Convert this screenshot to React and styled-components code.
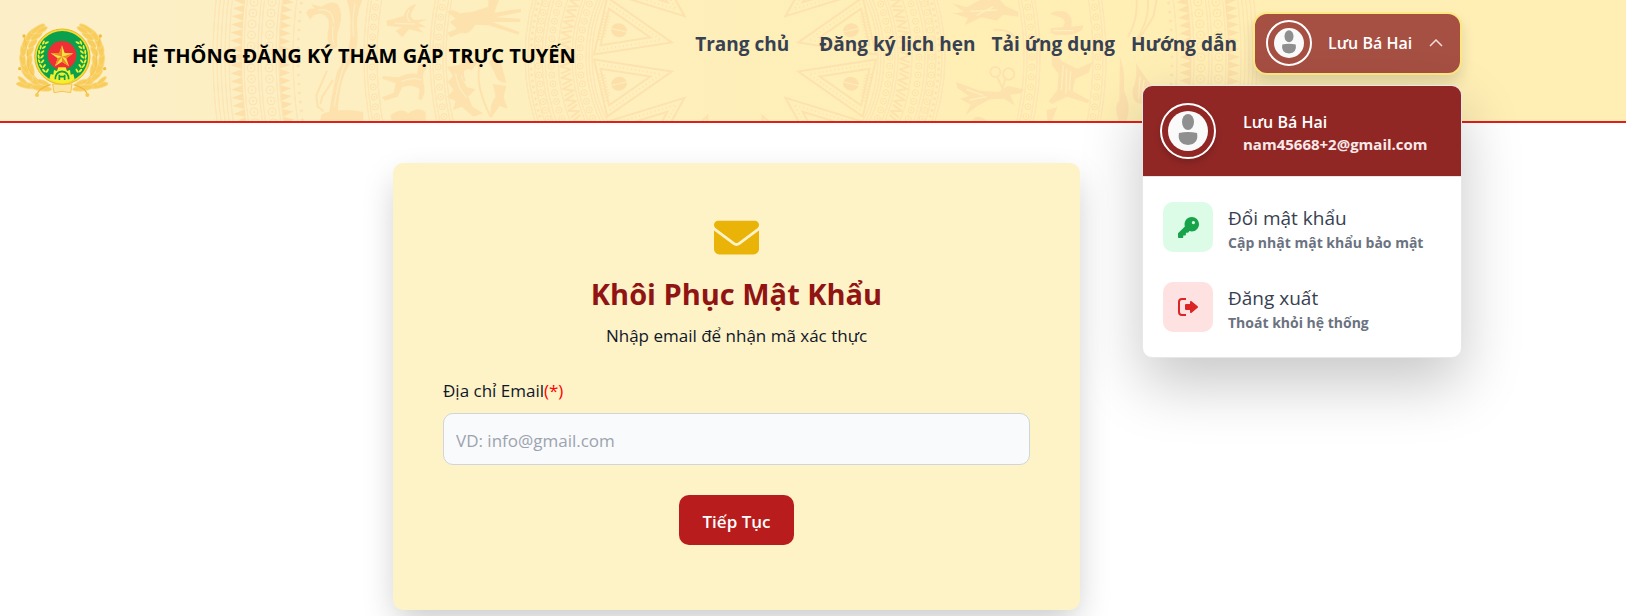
import { useState } from "react";
import styled, { createGlobalStyle } from "styled-components";
import { FaEnvelope, FaKey } from "react-icons/fa6";

const GlobalStyle = createGlobalStyle`
  * {
    box-sizing: border-box;
  }
  body {
    margin: 0;
    background: #ffffff;
    color: #0f172a;
    font-family: "Open Sans", "Noto Sans", sans-serif;
    font-size: 17px;
  }
`;

const Header = styled.header`
  position: relative;
  z-index: 2;
  background: linear-gradient(to right, #fcefc8, #ffefb5 60%);
  border-bottom: 2px solid #dc1f1f;
`;

const HeaderInner = styled.div`
  position: relative;
  display: flex;
  align-items: flex-start;
  justify-content: space-between;
  max-width: 1472px;
  padding: 12px 10px 0 16px;
`;

const DrumArt = styled.svg`
  position: absolute;
  left: 0;
  top: 0;
  width: 100%;
  height: 100%;
`;

const Brand = styled.a`
  position: relative;
  display: flex;
  align-items: center;
  gap: 24px;
  padding: 10px 0 23px;
  color: #000000;
  text-decoration: none;
`;

const BrandName = styled.span`
  padding-bottom: 8px;
  font-size: 20px;
  font-weight: 700;
  line-height: 28px;
  white-space: nowrap;
`;

const Nav = styled.nav`
  position: relative;
  display: flex;
  align-items: center;
  gap: 16px;
`;

const NavLink = styled.a`
  margin-right: ${(props) => (props.$wide ? "14px" : "0")};
  color: #374151;
  font-size: 19px;
  font-weight: 700;
  line-height: 28px;
  white-space: nowrap;
  text-decoration: none;
`;

const UserArea = styled.div`
  position: relative;
`;

const UserButton = styled.button`
  display: flex;
  align-items: center;
  width: 209px;
  padding: 6px 17px 7px 11px;
  border: 2px solid #fde882;
  border-radius: 14px;
  background: #a64f43;
  box-shadow: 0 8px 14px rgba(0, 0, 0, 0.12);
  color: #ffffff;
  font-family: inherit;
  cursor: pointer;
`;

const Avatar = styled.span`
  display: flex;
  flex: none;
  width: ${(props) => props.$size}px;
  height: ${(props) => props.$size}px;
  padding: 6px;
  border: 2px solid #ffffff;
  border-radius: 50%;
  box-shadow: ${(props) => (props.$raised ? "0 4px 6px rgba(0, 0, 0, 0.15)" : "none")};

  svg {
    width: 100%;
    height: 100%;
  }
`;

const UserName = styled.span`
  flex: 1;
  padding-left: 16px;
  font-size: 16px;
  font-weight: 600;
  line-height: 24px;
  text-align: left;
  white-space: nowrap;
`;

const Menu = styled.div`
  position: absolute;
  top: calc(100% + 10px);
  right: 0;
  width: 320px;
  overflow: hidden;
  border: 1px solid #e5e7eb;
  border-radius: 10px;
  background: #ffffff;
  box-shadow: 0 26px 60px rgba(0, 0, 0, 0.22);
`;

const MenuHeader = styled.div`
  display: flex;
  align-items: center;
  gap: 27px;
  padding: 17px;
  border-bottom: 1px solid #e5e7eb;
  background: #902725;
  color: #ffffff;
`;

const MenuUser = styled.div`
  padding-top: 3px;
`;

const MenuName = styled.div`
  font-size: 16px;
  font-weight: 600;
  line-height: 22px;
`;

const MenuEmail = styled.div`
  color: #fbe9e9;
  font-size: 15px;
  font-weight: 700;
  line-height: 22px;
`;

const MenuList = styled.div`
  display: flex;
  flex-direction: column;
  gap: 30px;
  padding: 25px 20px;
`;

const MenuItem = styled.button`
  display: flex;
  align-items: center;
  gap: 15px;
  height: 50px;
  padding: 0;
  border: 0;
  background: transparent;
  font-family: inherit;
  text-align: left;
  cursor: pointer;
`;

const MenuIcon = styled.span`
  display: flex;
  align-items: center;
  justify-content: center;
  width: 50px;
  height: 50px;
  border-radius: 10px;
  background: ${(props) => (props.$danger ? "#fee2e2" : "#dcfce7")};
  color: ${(props) => (props.$danger ? "#dc2626" : "#16a34a")};
`;

const MenuText = styled.span`
  padding-top: 4px;
`;

const MenuTitle = styled.span`
  display: block;
  color: #374151;
  font-size: 19px;
  font-weight: 500;
  line-height: 28px;
`;

const MenuHint = styled.span`
  display: block;
  color: #6b7280;
  font-size: 14px;
  font-weight: 700;
  line-height: 22px;
`;

const Main = styled.main`
  display: flex;
  justify-content: center;
  max-width: 1473px;
  padding: 40px 16px;
`;

const Card = styled.form`
  display: flex;
  flex-direction: column;
  align-items: center;
  width: 100%;
  max-width: 687px;
  padding: 52px 50px 65px;
  border-radius: 10px;
  background: #fef2c7;
  box-shadow: 0 14px 34px -4px rgba(0, 0, 0, 0.22);
`;

const CardTitle = styled.h1`
  margin: 14px 0 0;
  color: #911414;
  font-size: 29px;
  font-weight: 700;
  line-height: 40px;
`;

const CardText = styled.p`
  margin: 10px 0 0;
  font-size: 17px;
  font-weight: 500;
  line-height: 24px;
`;

const Field = styled.div`
  display: flex;
  flex-direction: column;
  align-self: stretch;
  gap: 10px;
  margin-top: 31px;
`;

const Label = styled.label`
  font-size: 17px;
  font-weight: 500;
  line-height: 24px;
`;

const Required = styled.span`
  color: #ff0000;
`;

const Input = styled.input`
  width: 100%;
  height: 52px;
  padding: 2px 12px 0;
  border: 1px solid #d1d5db;
  border-radius: 10px;
  background: #f9fafb;
  color: #111827;
  font-family: inherit;
  font-size: 17px;

  &::placeholder {
    color: #9ca3af;
    opacity: 1;
  }
`;

const Submit = styled.button`
  height: 50px;
  margin-top: 30px;
  padding: 2px 24px 0;
  border: 0;
  border-radius: 10px;
  background: #b91c1c;
  color: #ffffff;
  font-family: inherit;
  font-size: 17px;
  font-weight: 600;
  cursor: pointer;
`;

const CX = 735;
const CY = 57;

const polar = (r, deg) => {
  const a = (deg * Math.PI) / 180;
  return [CX - r * Math.cos(a), CY + r * Math.sin(a)];
};

// angles at which a ring still crosses the header, one every `step` pixels
const angles = (r, step) => {
  const limit = (Math.asin(Math.min(1, 68 / r)) * 180) / Math.PI;
  const d = ((step / r) * 180) / Math.PI;
  const out = [];
  for (let a = -Math.floor(limit / d) * d; a <= limit; a += d) out.push(a);
  return out;
};

const points = (list) =>
  list.map(([x, y]) => `${x.toFixed(1)},${y.toFixed(1)}`).join(" ");

const Teeth = ({ from, to, step }) => {
  const half = ((step / from) * 180) / Math.PI / 2;
  return angles(from, step).map((a) => (
    <polygon
      key={a}
      points={points([polar(from, a - half), polar(from, a + half), polar(to, a)])}
      fill="#fde0a9"
    />
  ));
};

const Coins = ({ r, size, step }) =>
  angles(r, step).map((a) => {
    const [x, y] = polar(r, a);
    return (
      <g key={a}>
        <circle cx={x} cy={y} r={size} fill="none" stroke="#fde2ae" />
        <circle cx={x} cy={y} r="1" fill="#fde2ae" />
      </g>
    );
  });

const Meander = ({ r }) =>
  angles(r, 11).map((a) => {
    const d = 300 / r;
    const p = [polar(r - 5, a - d), polar(r + 5, a - d / 3), polar(r - 5, a + d / 3), polar(r + 5, a + d)];
    return (
      <polyline
        key={a}
        points={points(p)}
        fill="none"
        stroke="#fde2ae"
        strokeWidth="2"
        strokeLinejoin="round"
      />
    );
  });

const Ray = ({ angle }) => (
  <g fill="none" stroke="#fde2ae">
    <polygon
      strokeWidth="2"
      points={points([polar(65, angle), polar(141, angle - 12), polar(141, angle + 12)])}
    />
    <polygon
      strokeWidth="2"
      points={points([polar(87, angle), polar(135, angle - 8), polar(135, angle + 8)])}
    />
    <polyline
      strokeWidth="2"
      strokeDasharray="1 3"
      points={points([polar(136, angle - 10), polar(76, angle), polar(136, angle + 10)])}
    />
    <ellipse
      cx={CX - 119}
      cy={CY}
      rx="8"
      ry="7"
      fill="#fde0a9"
      stroke="none"
      transform={`rotate(${-angle} ${CX} ${CY})`}
    />
    <path
      d={`M${CX - 128} ${CY}h22`}
      stroke="#fdeebd"
      transform={`rotate(${-angle} ${CX} ${CY})`}
    />
    <path
      d={`M${CX - 136} ${CY - 14}v28M${CX - 132} ${CY - 12}v24`}
      strokeDasharray="1 2"
      strokeWidth="3"
      transform={`rotate(${-angle} ${CX} ${CY})`}
    />
  </g>
);

const rings = [
  522, 518, 514, 510, 506, 491, 477, 474, 459, 456, 442, 371, 368, 358, 305,
  302, 292, 289, 210, 207, 201, 193, 190, 177, 163, 160, 149, 146, 143,
];

const HalfDrum = () => (
  <g>
    <g fill="none" stroke="#fde5b4" strokeWidth="1">
      {rings.map((r) => (
        <circle key={r} cx={CX} cy={CY} r={r} />
      ))}
    </g>
    <Teeth from={493} to={505} step={8} />
    <Teeth from={456} to={445} step={8} />
    <Coins r={484} size={4} step={11} />
    <Coins r={466} size={4} step={11} />
    <Coins r={437} size={1} step={9} />
    <Coins r={363} size={3} step={10} />
    <Coins r={297} size={3} step={10} />
    <Coins r={204} size={1} step={6} />
    <Coins r={197} size={3} step={9} />
    <Coins r={184} size={3} step={9} />
    <Meander r={170} />
    <Coins r={155} size={3} step={9} />
    {[-65, -39, -13, 13, 39, 65].map((a) => (
      <Ray key={a} angle={a} />
    ))}
  </g>
);

const Drum = () => (
  <DrumArt viewBox="0 0 1472 121" preserveAspectRatio="xMidYMid slice" aria-hidden="true">
    <HalfDrum />
    <g transform={`translate(${CX * 2} 0) scale(-1 1)`}>
      <HalfDrum />
    </g>
    {/* birds, deer and warriors on the left bands */}
    <g transform="translate(205 0) scale(0.3333)" fill="#fde2ae" stroke="none">
      <path d="M303 38Q310 22 330 26L318 12L350 20Q380 0 398 12Q416 40 404 78Q392 112 398 140L378 150Q360 118 372 80Q374 50 352 42Q325 38 316 60Z" />
      <path d="M425 0H472Q450 50 458 100Q460 160 428 205Q404 240 398 340L372 342Q384 260 396 215Q440 150 436 90Q440 40 425 0Z" />
      <path d="M350 342Q410 322 475 336V362H345Z" />
      <path d="M544 62L596 48Q604 18 634 12L620 36Q612 54 630 60L668 58L640 68L664 82L638 82L656 98L612 88L592 112L572 92L592 82L546 78Z" />
      <path d="M640 196Q668 184 664 206Q650 216 656 250Q664 276 650 300L640 298L644 268Q620 250 592 262L578 290L540 302L530 292L566 278L572 250L532 236L534 228L580 232Q610 216 636 222Z" />
      <path d="M556 346Q590 320 610 340Q640 318 662 336V362H560Z" />
      <path d="M726 36Q742 24 764 40L800 36L850 20V0H882L868 38L948 26V36L870 52L946 56V66L862 66L944 96L940 104L850 76L812 74Q790 108 770 98L736 112L728 98L756 86L734 66L752 56Z" />
      <path d="M726 200L760 196L790 178L822 182L800 210Q776 200 768 230L786 262L812 268L790 290L802 320L834 340L806 350L770 320L744 330L752 304L726 290L746 270L728 246L744 228Z" />
      <path d="M852 186Q880 160 890 196L904 248Q876 250 868 216ZM864 252L904 258L896 290L908 326L884 318L858 354Q852 312 872 290Z" />
    </g>
    <g transform="translate(205 0) scale(0.3333)" fill="none" stroke="#fcedc0" strokeWidth="4">
      <path d="M340 30Q384 22 386 70M384 80Q380 110 388 136M450 10Q440 60 446 110M440 150Q404 210 388 320" />
      <path d="M612 30Q600 54 616 66M570 70L630 72M590 244Q620 230 650 240M752 220Q756 260 784 292" />
    </g>
    <g transform="translate(205 0) scale(0.3333)" fill="none" stroke="#fde2ae" strokeWidth="6">
      <path d="M366 212L334 286L338 320L356 334M384 240L352 290L346 312" />
      <path d="M824 196Q810 260 858 352M786 190Q764 214 780 244" />
    </g>
    {/* birds and deer on the right bands */}
    <g transform="translate(940 0) scale(0.3333)" fill="#fde2ae" stroke="none">
      <path d="M36 10L80 22L120 0H180L196 18L236 36L234 50L190 44L170 62L124 52L74 76L84 54L36 40L72 36Z" />
      <path d="M330 42Q346 28 378 36Q400 48 394 80L430 76L428 88Q400 110 366 104Q326 110 332 84L368 82Q384 60 360 52Z" />
      <path d="M334 166Q352 160 366 184L412 206L458 186L446 218L406 236L398 274L448 300L444 310L380 290L336 312L326 304L352 270L356 222L336 196Z" />
      <path d="M48 246L120 272L176 276L204 258L252 268L244 280L210 284L224 316L192 296L150 298L112 318L76 346L92 314L60 296L86 288L52 264Z" />
      <path d="M540 170Q556 210 552 270Q576 320 560 362H536Q520 320 538 300Z" />
      <path d="M588 188Q604 216 632 252L604 312Q574 310 578 268Q592 240 588 188Z" />
      <path d="M320 330L352 322L336 362H322ZM96 362Q110 340 132 356L140 362Z" />
    </g>
    <g transform="translate(940 0) scale(0.3333)" fill="none" stroke="#feefbb" strokeWidth="4">
      <path d="M90 34L170 30M110 46L160 20M340 92H400M370 196L364 270M380 206L378 280M392 214L388 270M80 268L130 286M90 300L140 290M600 230L596 296M612 240L606 290" />
    </g>
    <g transform="translate(940 0) scale(0.3333)" fill="none" stroke="#fde2ae" strokeWidth="6">
      <circle cx="166" cy="216" r="15" />
      <circle cx="206" cy="222" r="17" />
      <path d="M172 232L190 270M196 238L186 270M160 90Q210 84 228 118" />
      <path d="M564 110Q594 60 590 0M584 130Q630 60 624 0M650 0L640 50L596 120" />
    </g>
  </DrumArt>
);

// x, y, half length, half thickness, angle
const leaves = [
  [78, 254, 32, 9, 10], [66, 240, 18, 6, 40], [98, 238, 26, 9, 42], [80, 222, 24, 9, 48],
  [72, 200, 22, 9, 62], [92, 206, 22, 8, 78], [66, 176, 20, 9, 82], [86, 182, 20, 8, 100],
  [68, 148, 20, 9, 96], [88, 152, 18, 8, 118], [76, 124, 20, 9, 112], [96, 128, 18, 8, 132],
  [90, 102, 22, 9, 128], [108, 106, 20, 8, 146], [112, 84, 24, 8, 148], [124, 88, 18, 7, 150],
  [122, 262, 32, 9, 8], [128, 246, 20, 7, 24],
];

const grains = [210, 196, 182, 168, 154, 140, 126];

const WreathHalf = () => (
  <g>
    {leaves.map(([x, y, rx, ry, a]) => (
      <ellipse
        key={`${x}-${y}`}
        cx={x}
        cy={y}
        rx={rx}
        ry={ry}
        transform={`rotate(${a} ${x} ${y})`}
        fill="#f9cd5c"
        stroke="#fadb8a"
        strokeWidth="2"
      />
    ))}
    <circle cx="70" cy="106" r="5" fill="#f3bd3a" />
    <circle cx="57" cy="204" r="5" fill="#f3bd3a" />
    <path d="M108 286Q112 262 150 252" fill="none" stroke="#f0b93c" strokeWidth="4" />
    <path d="M70 108L80 150L84 206L120 248" fill="none" stroke="#f2be45" strokeWidth="2" />
    <circle cx="109" cy="283" r="6" fill="#f8ca50" />
  </g>
);

const Grains = () => (
  <g fill="#f4ee2d">
    {grains.map((y, i) => {
      const x = 184 - Math.sqrt(66 * 66 - (y - 167) * (y - 167));
      return (
        <g key={y}>
          <ellipse cx={x + 6} cy={y} rx="7" ry="3" transform={`rotate(${-58 + i * 5} ${x + 6} ${y})`} />
          <ellipse cx={x - 4} cy={y} rx="7" ry="3" transform={`rotate(${42 + i * 12} ${x - 4} ${y})`} />
        </g>
      );
    })}
  </g>
);

const Emblem = () => (
  <svg width="92" height="76" viewBox="46 65 276 226" aria-hidden="true">
    <WreathHalf />
    <g transform="translate(369 0) scale(-1 1)">
      <WreathHalf />
    </g>
    <path d="M156 250H214L210 276Q184 268 160 276Z" fill="#fbe3a0" stroke="#f3c552" strokeWidth="3" />
    <circle cx="185" cy="168" r="83" fill="#f6dc2e" stroke="#e9b92c" strokeWidth="3" />
    <circle cx="185" cy="168" r="77" fill="#0aa14e" />
    <Grains />
    <g transform="translate(369 0) scale(-1 1)">
      <Grains />
    </g>
    <circle cx="184" cy="164" r="43" fill="#ee2f33" />
    <polygon points="184,134 192,157 218,158 197,173 205,197 184,183 163,197 171,173 150,158 176,157" fill="#fbe044" />
    <path
      d="M184 134L184 168L176 157ZM218 158L184 168L197 173ZM205 197L184 168L184 183ZM163 197L184 168L171 173ZM150 158L184 168L176 157Z"
      fill="#ea8a22"
    />
    {/* half gear under the star */}
    <path
      d="M146 236L150 220L158 222L160 208L169 211L173 200H195L199 211L208 208L210 222L218 220L222 236Q204 248 184 248Q164 248 146 236Z"
      fill="#f4ee2d"
    />
    <path
      d="M164 236Q164 214 184 212Q204 214 204 236M176 238V222M192 238V222M176 228H192"
      fill="none"
      stroke="#0aa14e"
      strokeWidth="5"
    />
  </svg>
);

const Person = () => (
  <svg viewBox="0 0 40 40" aria-hidden="true">
    <circle cx="20" cy="20" r="20" fill="#fafafa" />
    <ellipse cx="20" cy="11" rx="6" ry="8" fill="#8f8f8f" />
    <path d="M11 22Q20 20 29 22Q31 33 20 34Q9 33 11 22Z" fill="#8f8f8f" />
  </svg>
);

const Chevron = ({ open }) => (
  <svg width="14" height="8" viewBox="0 0 14 8" aria-hidden="true">
    <path d={open ? "M1 7L7 1L13 7" : "M1 1L7 7L13 1"} fill="none" stroke="#f5dcd6" strokeWidth="1.5" />
  </svg>
);

const LogoutIcon = () => (
  <svg width="22" height="18" viewBox="0 0 22 18" aria-hidden="true">
    <path d="M9 1H5Q2 1 2 4V14Q2 17 5 17H9" fill="none" stroke="currentColor" strokeWidth="2" />
    <path
      d="M9 7H14V4L20 9L14 14V11H9Z"
      fill="currentColor"
      stroke="currentColor"
      strokeWidth="2"
      strokeLinejoin="round"
    />
  </svg>
);

const UserMenu = () => {
  const [open, setOpen] = useState(true);
  return (
    <UserArea>
      <UserButton type="button" aria-expanded={open} onClick={() => setOpen(!open)}>
        <Avatar $size={46}>
          <Person />
        </Avatar>
        <UserName>Lưu Bá Hai</UserName>
        <Chevron open={open} />
      </UserButton>
      {open && (
        <Menu>
          <MenuHeader>
            <Avatar $size={56} $raised>
              <Person />
            </Avatar>
            <MenuUser>
              <MenuName>Lưu Bá Hai</MenuName>
              <MenuEmail>nam45668+2@gmail.com</MenuEmail>
            </MenuUser>
          </MenuHeader>
          <MenuList>
            <MenuItem type="button">
              <MenuIcon>
                <FaKey size={21} />
              </MenuIcon>
              <MenuText>
                <MenuTitle>Đổi mật khẩu</MenuTitle>
                <MenuHint>Cập nhật mật khẩu bảo mật</MenuHint>
              </MenuText>
            </MenuItem>
            <MenuItem type="button">
              <MenuIcon $danger>
                <LogoutIcon />
              </MenuIcon>
              <MenuText>
                <MenuTitle>Đăng xuất</MenuTitle>
                <MenuHint>Thoát khỏi hệ thống</MenuHint>
              </MenuText>
            </MenuItem>
          </MenuList>
        </Menu>
      )}
    </UserArea>
  );
};

const App = () => {
  return (
    <>
      <GlobalStyle />
      <Header>
        <HeaderInner>
          <Drum />
          <Brand href="#">
            <Emblem />
            <BrandName>HỆ THỐNG ĐĂNG KÝ THĂM GẶP TRỰC TUYẾN</BrandName>
          </Brand>
          <Nav>
            <NavLink href="#" $wide>Trang chủ</NavLink>
            <NavLink href="#">Đăng ký lịch hẹn</NavLink>
            <NavLink href="#">Tải ứng dụng</NavLink>
            <NavLink href="#">Hướng dẫn</NavLink>
            <UserMenu />
          </Nav>
        </HeaderInner>
      </Header>
      <Main>
        <Card onSubmit={(e) => e.preventDefault()}>
          <FaEnvelope size={45} color="#eab308" />
          <CardTitle>Khôi Phục Mật Khẩu</CardTitle>
          <CardText>Nhập email để nhận mã xác thực</CardText>
          <Field>
            <Label htmlFor="email">
              Địa chỉ Email<Required>(*)</Required>
            </Label>
            <Input id="email" type="email" placeholder="VD: info@gmail.com" />
          </Field>
          <Submit type="submit">Tiếp Tục</Submit>
        </Card>
      </Main>
    </>
  );
};

export default App;
